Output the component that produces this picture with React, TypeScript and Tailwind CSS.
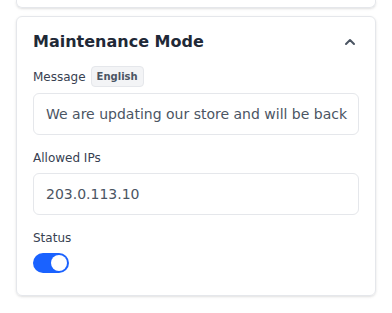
import { useState } from "react";

function ChevronUpIcon({ className }: { className?: string }) {
  return (
    <svg className={className} fill="none" viewBox="0 0 24 24" stroke="currentColor">
      <path strokeLinecap="round" strokeLinejoin="round" strokeWidth={3} d="M6 15l6-6 6 6" />
    </svg>
  );
}

function Field({ label, badge, children }: { label: string; badge?: string; children: React.ReactNode }) {
  return (
    <div>
      <div className="flex items-center gap-[5px] h-[21px] mb-[6px]">
        <span className="text-[12px] text-[#374151]">{label}</span>
        {badge && (
          <span className="h-[21px] px-[5px] flex items-center rounded bg-[#f3f4f6] border border-[#e5e7eb] text-[10px] font-bold text-[#4b5563]">
            {badge}
          </span>
        )}
      </div>
      {children}
    </div>
  );
}

export default function App() {
  const [enabled, setEnabled] = useState(true);

  return (
    <div className="min-h-screen bg-white px-4 flex flex-col gap-2 font-['DejaVu_Sans',sans-serif]">
      {/* Bottom edge of the previous card */}
      <div className="h-2 border border-t-0 border-[#e5e7eb] rounded-b-md shadow-sm" />

      <div className="border border-[#e5e7eb] rounded-md shadow-sm px-4 pt-[11px] pb-[22px]">
        <div className="flex items-center justify-between h-7">
          <h2 className="text-[16px] font-bold text-[#1f2937]">Maintenance Mode</h2>
          <button className="text-[#4b5563] mr-[1px]">
            <ChevronUpIcon className="w-4 h-4" />
          </button>
        </div>

        <div className="mt-[10px] flex flex-col gap-[13px]">
          <Field label="Message" badge="English">
            <div className="h-[42px] border border-[#e5e7eb] rounded-md px-3 flex items-center overflow-hidden">
              <span className="text-[14px] text-[#4b5563] whitespace-nowrap">
                We are updating our store and will be back
              </span>
            </div>
          </Field>

          <div>
            <div className="h-5 mb-[5px] flex items-center text-[12px] text-[#374151]">Allowed IPs</div>
            <div className="h-[42px] border border-[#e5e7eb] rounded-md px-3 flex items-center">
              <span className="text-[14px] text-[#4b5563]">203.0.113.10</span>
            </div>
          </div>

          <div>
            <div className="h-5 mb-[5px] flex items-center text-[12px] text-[#374151]">Status</div>
            <button
              onClick={() => setEnabled(!enabled)}
              className={
                "w-9 h-5 rounded-full flex items-center px-[2px] " +
                (enabled ? "bg-[#1a62ff] justify-end" : "bg-[#d1d5db] justify-start")
              }
            >
              <span className="w-4 h-4 rounded-full bg-white" />
            </button>
          </div>
        </div>
      </div>
    </div>
  );
}
